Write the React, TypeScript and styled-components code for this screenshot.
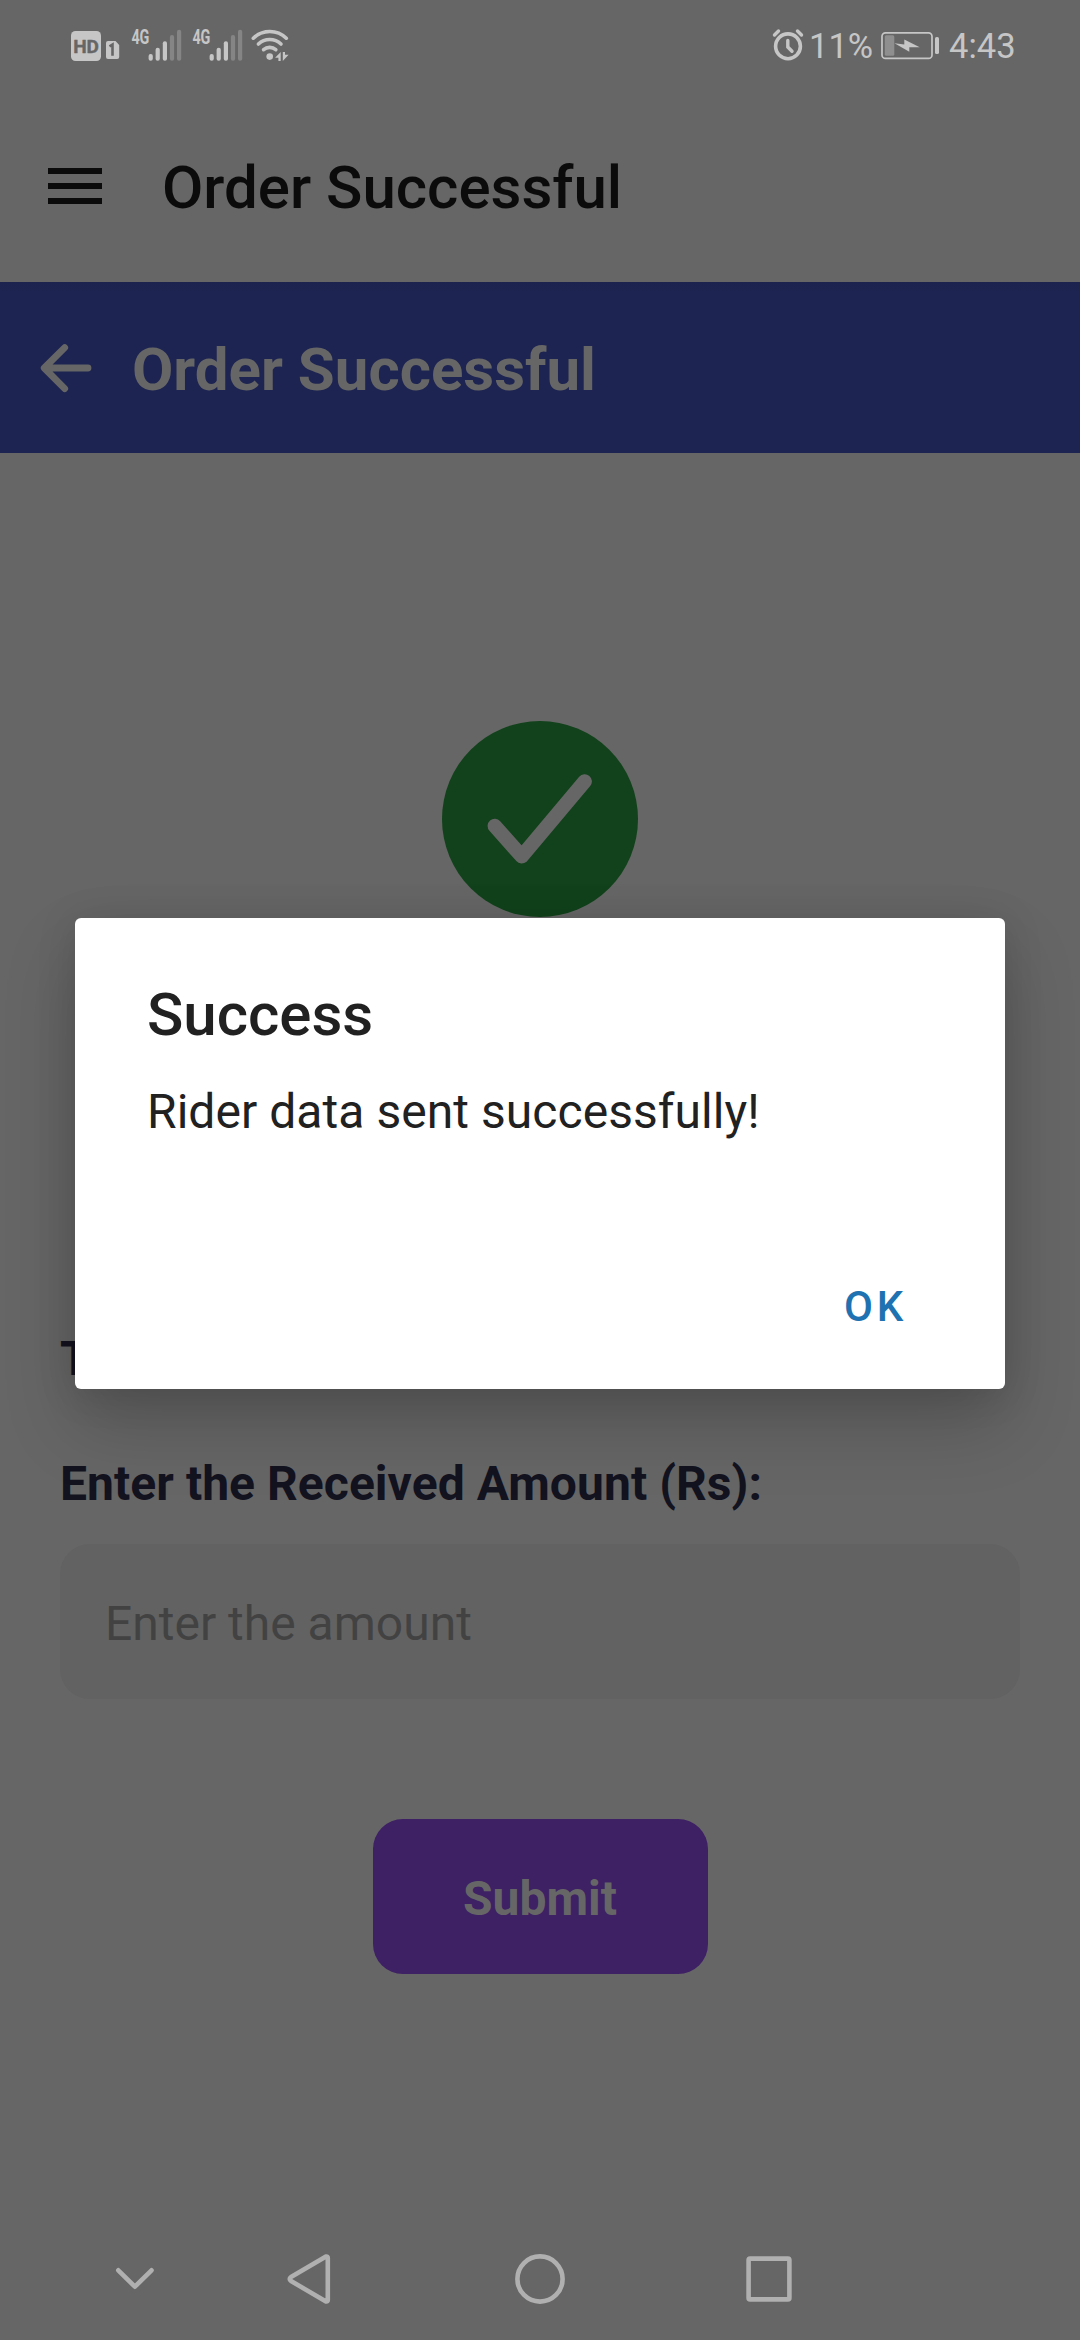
import React from "react";
import styled, { createGlobalStyle } from "styled-components";

const Global = createGlobalStyle`
  *, *::before, *::after { box-sizing: border-box; }
  html, body { margin: 0; padding: 0; background: #666666; }
  body { font-family: Roboto, "Liberation Sans", sans-serif; }
`;

const Screen = styled.div`
  position: relative;
  width: 1080px;
  height: 2340px;
  display: flex;
  flex-direction: column;
  background: #666666;
  overflow: hidden;
`;

const StatusBar = styled.header`
  height: 90px;
  padding: 0 67px 0 70px;
  display: flex;
  justify-content: space-between;
  color: #c6c6c6;
`;

const StatusGroup = styled.div`
  display: flex;
  align-items: flex-start;
`;

const StatusText = styled.span<{ $size: number; $gap: number; $width: number }>`
  font-size: ${(p) => p.$size}px;
  line-height: 42px;
  padding-top: 25px;
  margin-left: ${(p) => p.$gap}px;
  width: ${(p) => p.$width}px;
  white-space: nowrap;
`;

const TitleBar = styled.div`
  height: 192px;
  padding: 62px 48px 0;
  display: flex;
  align-items: flex-start;
  gap: 60px;
`;

const MenuButton = styled.button`
  width: 54px;
  height: 36px;
  margin-top: 16px;
  padding: 0;
  border: 0;
  background: none;
  display: flex;
  flex-direction: column;
  justify-content: space-between;
`;

const MenuLine = styled.span`
  height: 6px;
  background: #0b0b0b;
`;

const ScreenTitle = styled.h1`
  margin: 0;
  font-size: 60px;
  line-height: 72px;
  font-weight: 500;
  color: #0b0b0b;
  white-space: nowrap;
`;

const BlueBar = styled.div`
  height: 171px;
  padding: 0 36px;
  display: flex;
  align-items: center;
  gap: 36px;
  background: linear-gradient(#1c234d, #1d2451 10px);
`;

const BlueTitle = styled.h2`
  margin: 4px 0 0;
  font-size: 60px;
  line-height: 72px;
  font-weight: 700;
  color: #666666;
  white-space: nowrap;
`;

const Content = styled.main`
  flex: 1;
  padding: 268px 60px 0;
  display: flex;
  flex-direction: column;
`;

const CheckBadge = styled.div`
  align-self: center;
  width: 196px;
  height: 196px;
  border-radius: 50%;
  background: #11421b;
`;

const Total = styled.div`
  margin-top: 414px;
  font-size: 48px;
  line-height: 56px;
  font-weight: 700;
  color: #13121f;
`;

const Label = styled.label`
  margin-top: 69px;
  font-size: 48px;
  line-height: 56px;
  font-weight: 700;
  letter-spacing: 0.05px;
  color: #13121f;
  white-space: nowrap;
`;

const AmountField = styled.input`
  margin-top: 32px;
  height: 155px;
  width: 100%;
  padding: 4px 45px 0;
  border: 0;
  border-radius: 30px;
  background: #626262;
  font-family: inherit;
  font-size: 48px;
  color: #424242;
  outline: none;
  &::placeholder { color: #424242; opacity: 1; }
`;

const SubmitButton = styled.button`
  align-self: center;
  margin-top: 120px;
  width: 335px;
  height: 155px;
  border: 0;
  border-radius: 30px;
  background: #3e2065;
  font-family: inherit;
  font-size: 48px;
  font-weight: 700;
  color: #666666;
  padding: 4px 0 0;
`;

const NavBar = styled.nav`
  height: 120px;
  display: flex;
  align-items: center;
  padding: 0 0 2px 105px;
`;

const NavSlot = styled.span<{ $gap: number }>`
  display: flex;
  width: 60px;
  height: 60px;
  margin-left: ${(p) => p.$gap}px;
`;

const Dialog = styled.section`
  position: absolute;
  left: 75px;
  top: 918px;
  width: 930px;
  height: 471px;
  padding: 61px 72px 47px;
  display: flex;
  flex-direction: column;
  border-radius: 6px;
  background: #ffffff;
  color: #212121;
  box-shadow: 0 36px 72px rgba(0, 0, 0, 0.19), 0 4px 40px rgba(0, 0, 0, 0.12);
`;

const DialogTitle = styled.h3`
  margin: 0;
  font-size: 60px;
  line-height: 72px;
  font-weight: 500;
`;

const DialogText = styled.p`
  margin: 33px 0 0;
  font-size: 48px;
  line-height: 56px;
  letter-spacing: 0.05px;
  white-space: nowrap;
`;

const DialogAction = styled.button`
  align-self: flex-end;
  margin: auto 26px 0 0;
  padding: 0;
  border: 0;
  background: none;
  font-family: inherit;
  font-size: 42px;
  line-height: 70px;
  font-weight: 500;
  letter-spacing: 3.75px;
  color: #1f72b1;
`;

const Signal = ({ x }: { x: number }) => (
  <g transform={`translate(${x} 0)`} fill="#c6c6c6">
    <text x="0.8" y="43.5" fontSize="19.5" fontWeight="700" textLength="18" lengthAdjust="spacingAndGlyphs">4G</text>
    <rect x="18" y="54" width="4.2" height="6.7" rx="2" />
    <rect x="25" y="47.7" width="4.2" height="13" rx="2" />
    <rect x="32.2" y="41.3" width="4.2" height="19.4" rx="2" />
    <rect x="39.3" y="35" width="4.2" height="25.7" rx="2" fill="#858585" />
    <rect x="46.4" y="29.7" width="4.2" height="31" rx="2" fill="#858585" />
  </g>
);

const ConnectivityIcons = () => (
  <svg width="230" height="80" viewBox="70 0 230 80" fontFamily="Roboto, sans-serif">
    <rect x="71" y="31" width="30" height="30" rx="4.5" fill="#c6c6c6" />
    <text x="73.2" y="52.8" fontSize="18.5" fontWeight="700" fill="#666666" stroke="#666666" strokeWidth="0.4" textLength="25.8" lengthAdjust="spacingAndGlyphs">HD</text>
    <path d="M108 41h7.5l3.7 4v12a2 2 0 0 1-2 2H108a2 2 0 0 1-2-2V43a2 2 0 0 1 2-2z" fill="#c6c6c6" />
    <path d="M109.5 46.3l3-1.8v11.3" fill="none" stroke="#666666" strokeWidth="2.6" />
    <Signal x={130.6} />
    <Signal x={191.6} />
    <g fill="none" stroke="#c6c6c6" strokeWidth="3.6" strokeLinecap="round">
      <path d="M253.3 38.2a23.5 23.5 0 0 1 33 0" />
      <path d="M258.4 44a16.4 16.4 0 0 1 22.6 0" />
      <path d="M263.6 49.7a9.2 9.2 0 0 1 12.2 0" />
    </g>
    <circle cx="269.7" cy="56.6" r="3.3" fill="#c6c6c6" />
    <path d="M280.7 52v9h-2.3v-3.2h-3.3zM282.8 61v-9h2.2v2.8h3.6z" fill="#c6c6c6" />
  </svg>
);

const AlarmIcon = () => (
  <svg width="34" height="80" viewBox="771 0 34 80" fill="none" stroke="#c6c6c6" strokeLinecap="round">
    <circle cx="788" cy="46.3" r="12.4" strokeWidth="3.6" />
    <path d="M774.5 35l4-4M801.5 35l-4-4" strokeWidth="3.4" />
    <path d="M787.8 40.5v6.5l4.2 4.3" strokeWidth="3.4" />
  </svg>
);

const BatteryIcon = () => (
  <svg width="60" height="80" viewBox="880 0 60 80">
    <rect x="882" y="32.8" width="50" height="25.6" rx="3.5" fill="none" stroke="#c6c6c6" strokeWidth="1.7" />
    <rect x="884.8" y="35.3" width="9.5" height="20.5" rx="1.5" fill="#8f8f8f" />
    <path d="M894.5 43.2l9.8 1.2v-5l15.4 7.8-10.4.1v4.5z" fill="#c6c6c6" />
    <rect x="935" y="37" width="4" height="17" rx="1.6" fill="#c6c6c6" />
  </svg>
);

const BackArrow = () => (
  <svg width="60" height="60" viewBox="36 338 60 60" fill="none" stroke="#666666" strokeWidth="6.8" strokeLinecap="round" strokeLinejoin="round">
    <path d="M64.7 347.7L44.2 368l20.5 20.6M44.8 368H88" />
  </svg>
);

const CheckMark = () => (
  <svg width="196" height="196" viewBox="442 721 196 196" fill="none" stroke="#666666" strokeWidth="14.4" strokeLinecap="round" strokeLinejoin="round">
    <path d="M494.8 826l26.9 30.3 63-74.9" />
  </svg>
);

const navStroke = { fill: "none", stroke: "#b0b0b0", strokeWidth: 4.6, strokeLinecap: "round", strokeLinejoin: "round" } as const;

export default function App() {
  return (
    <>
      <Global />
      <Screen>
        <StatusBar>
          <StatusGroup>
            <ConnectivityIcons />
          </StatusGroup>
          <StatusGroup>
            <AlarmIcon />
            <StatusText $size={34.5} $gap={4} $width={71}>11%</StatusText>
            <BatteryIcon />
            <StatusText $size={34.5} $gap={9} $width={64}>4:43</StatusText>
          </StatusGroup>
        </StatusBar>
        <TitleBar>
          <MenuButton aria-label="Menu">
            <MenuLine />
            <MenuLine />
            <MenuLine />
          </MenuButton>
          <ScreenTitle>Order Successful</ScreenTitle>
        </TitleBar>
        <BlueBar>
          <BackArrow />
          <BlueTitle>Order Successful</BlueTitle>
        </BlueBar>
        <Content>
          <CheckBadge>
            <CheckMark />
          </CheckBadge>
          <Total>T</Total>
          <Label htmlFor="amount">Enter the Received Amount (Rs):</Label>
          <AmountField id="amount" placeholder="Enter the amount" />
          <SubmitButton>Submit</SubmitButton>
        </Content>
        <NavBar>
          <NavSlot $gap={0}>
            <svg width="60" height="60" viewBox="105 2249 60 60" {...navStroke}>
              <path d="M118.3 2270.3l16.6 16.4 16.6-16.4" />
            </svg>
          </NavSlot>
          <NavSlot $gap={113}>
            <svg width="60" height="60" viewBox="278 2249 60 60" {...navStroke}>
              <path d="M326 2256.5l-35 20.5q-2.6 2 0 4l35 20.5q1.8.4 1.8-1.5v-42q0-1.9-1.8-1.5z" />
            </svg>
          </NavSlot>
          <NavSlot $gap={172}>
            <svg width="60" height="60" viewBox="510 2249 60 60" {...navStroke}>
              <circle cx="540" cy="2279" r="22.6" />
            </svg>
          </NavSlot>
          <NavSlot $gap={169}>
            <svg width="60" height="60" viewBox="739 2249 60 60" {...navStroke}>
              <rect x="748.6" y="2258.6" width="40.8" height="40.8" rx="1.5" />
            </svg>
          </NavSlot>
        </NavBar>
        <Dialog role="alertdialog">
          <DialogTitle>Success</DialogTitle>
          <DialogText>Rider data sent successfully!</DialogText>
          <DialogAction>OK</DialogAction>
        </Dialog>
      </Screen>
    </>
  );
}
